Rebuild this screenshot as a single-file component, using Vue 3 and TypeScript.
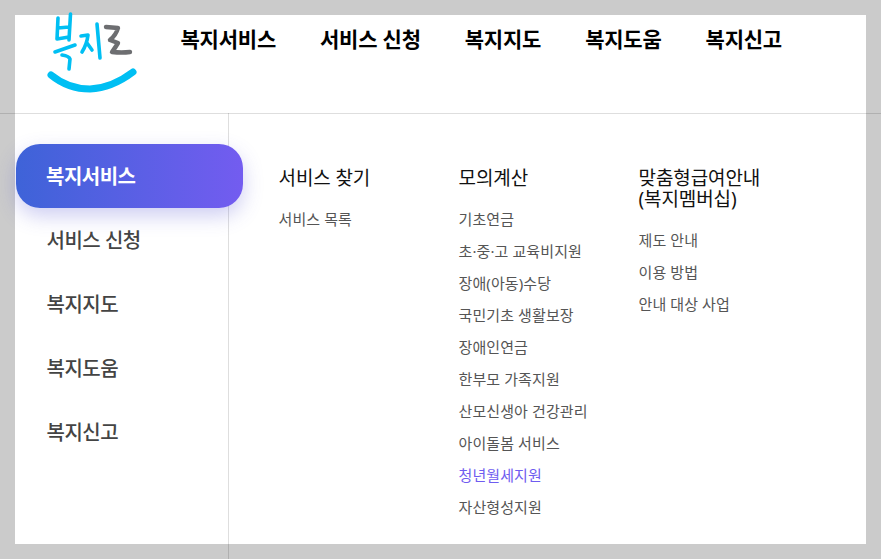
<script setup lang="ts">
const top = ['복지서비스', '서비스 신청', '복지지도', '복지도움', '복지신고']
const cols = [
  { title: '서비스 찾기', items: ['서비스 목록'] },
  { title: '모의계산', items: ['기초연금', '초·중·고 교육비지원', '장애(아동)수당', '국민기초 생활보장', '장애인연금', '한부모 가족지원', '산모신생아 건강관리', '아이돌봄 서비스', '청년월세지원', '자산형성지원'] },
  { title: '맞춤형급여안내\n(복지멤버십)', items: ['제도 안내', '이용 방법', '안내 대상 사업'] },
]
</script>

<template>
  <div class="page">
    <div class="panel">
      <header class="head">
        <svg class="logo" width="105" height="90" viewBox="40 8 105 90" fill="none" stroke-linecap="round" stroke-linejoin="round">
          <g stroke="#00bff3" stroke-width="3.600">
            <path d="M58 18 L57 39 L69 37 M58 28 L69 27 M70.500 14 L69 40 M55 52 L75 45 M62 55 Q69 56 70 59 L69 69" />
            <path d="M81 36 L88 35 Q87 44 82 52 M87 43 L92 50 M97 24 L100 58" />
          </g>
          <path d="M106 27 L118 28 Q116 35 110 40 L118 43 Q115 48 112 52 Q122 53 130 52" stroke="#6d6e71" stroke-width="4.400" />
          <path d="M51 75 Q68 89 90 89 Q112 88 133 72" stroke="#00bff3" stroke-width="7" />
        </svg>
        <nav class="gnb">
          <a v-for="t in top" :key="t">{{ t }}</a>
        </nav>
      </header>
      <div class="body">
        <aside class="side">
          <a v-for="(t, i) in top" :key="t" :class="{ on: i === 0 }">{{ t }}</a>
        </aside>
        <div class="cols">
          <section v-for="c in cols" :key="c.title" class="col">
            <h3>{{ c.title }}</h3>
            <ul>
              <li v-for="it in c.items" :key="it" :class="{ hot: it === '청년월세지원' }">{{ it }}</li>
            </ul>
          </section>
        </div>
      </div>
    </div>
    <i class="hline"></i>
    <i class="vline"></i>
  </div>
</template>

<style>
html, body { margin: 0; background: #cbcbcb; }
</style>

<style scoped>
.page {
  position: relative;
  width: 881px;
  height: 559px;
  box-sizing: border-box;
  padding: 15px;
  overflow: hidden;
  background: #cbcbcb;
  font-family: "Noto Sans", "Noto Sans CJK KR", sans-serif;
}
.panel {
  height: 529px;
  background: #fff;
  display: flex;
  flex-direction: column;
}
.head {
  height: 98px;
  flex: none;
  display: flex;
  position: relative;
}
.logo {
  position: absolute;
  left: 25px;
  top: -7px;
}
.gnb {
  display: flex;
  gap: 44px;
  margin-left: 165.500px;
  padding-top: 9px;
}
.gnb a {
  font-size: 21px;
  line-height: 30px;
  font-weight: 700;
  letter-spacing: -0.22px;
  color: #000;
}
.body {
  flex: 1;
  display: flex;
}
.side {
  width: 213px;
  flex: none;
  box-sizing: border-box;
  padding-top: 31px;
  display: flex;
  flex-direction: column;
}
.side a {
  width: 227px;
  height: 64px;
  box-sizing: border-box;
  padding-left: 30.500px;
  margin-left: 1px;
  font-size: 20px;
  line-height: 66px;
  font-weight: 500;
  letter-spacing: -0.5px;
  color: #444;
  position: relative;
  z-index: 1;
}
.side a.on {
  padding-left: 30px;
  color: #fff;
  font-weight: 700;
  border-radius: 24px;
  background: linear-gradient(90deg, #3e63d8, #735cf0);
  box-shadow: 0 8px 20px rgba(80, 80, 210, 0.28);
}
.cols {
  display: flex;
  padding: 55px 0 0 50.500px;
}
.col {
  width: 180px;
}
.col h3 {
  margin: 0;
  font-size: 19px;
  line-height: 20.900px;
  font-weight: 400;
  letter-spacing: -0.1px;
  color: #111;
  white-space: pre-line;
}
.col ul {
  list-style: none;
  margin: 14px 0 0;
  padding: 0;
}
.col li {
  height: 32px;
  font-size: 15px;
  line-height: 32px;
  letter-spacing: 0.1px;
  color: #555;
}
.col li.hot { color: #6f5cf0; }
.hline {
  position: absolute;
  left: 0;
  top: 113px;
  width: 881px;
  height: 1px;
  background: rgba(0, 0, 0, 0.13);
}
.vline {
  position: absolute;
  left: 228px;
  top: 113px;
  width: 1px;
  height: 446px;
  background: rgba(0, 0, 0, 0.13);
}
</style>
